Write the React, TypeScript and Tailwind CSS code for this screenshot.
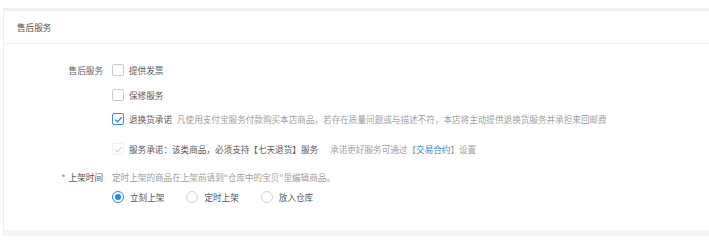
import React, { useState } from 'react';

const Checkbox: React.FC<{ checked?: boolean; disabled?: boolean }> = ({ checked, disabled }) => {
  if (disabled) {
    return (
      <span className="w-[12px] h-[12px] rounded-[2px] border border-[#f0f0f0] bg-white flex items-center justify-center shrink-0">
        <svg width="9" height="9" viewBox="0 0 10 10">
          <path d="M1.5 5.2 L4 7.6 L8.6 2.4" fill="none" stroke="#d5d5d5" strokeWidth="1.4" />
        </svg>
      </span>
    );
  }
  return (
    <span
      className={
        checked
          ? 'w-[12px] h-[12px] rounded-[2px] border border-[#3a8ee6] bg-white flex items-center justify-center shrink-0'
          : 'w-[12px] h-[12px] rounded-[2px] border border-[#c9c9c9] bg-white shrink-0'
      }
    >
      {checked && (
        <svg width="9" height="9" viewBox="0 0 10 10">
          <path d="M1.5 5.2 L4 7.6 L8.6 2.4" fill="none" stroke="#2d86e0" strokeWidth="1.5" />
        </svg>
      )}
    </span>
  );
};

const Radio: React.FC<{ checked?: boolean; label: string; onClick: () => void }> = ({ checked, label, onClick }) => (
  <button onClick={onClick} className="flex items-center gap-[6px] mr-[22px] cursor-pointer">
    <span
      className={
        checked
          ? 'w-[12px] h-[12px] rounded-full border border-[#2d86e0] flex items-center justify-center'
          : 'w-[12px] h-[12px] rounded-full border border-[#cfcfcf]'
      }
    >
      {checked && <span className="w-[6px] h-[6px] rounded-full bg-[#2d86e0]" />}
    </span>
    <span className="text-[#555]">{label}</span>
  </button>
);

const App: React.FC = () => {
  const [shelf, setShelf] = useState('now');

  return (
    <div className="w-[709px] h-[248px] bg-white pt-[8px] pl-[3px] text-[8.6px] leading-[14px] text-[#5a5a5a] font-['Noto_Sans_CJK_SC','Noto_Sans',sans-serif]">
      <div className="border-t-[3px] border-[#efefef] border-l border-l-[#ededed]">
        <div className="h-[33px] flex items-center pl-[13px] border-b border-[#efefef] text-[#555]">售后服务</div>

        <div className="pt-[19px] pb-[26px]">
          <div className="flex">
            <div className="w-[99px] text-right text-[#666]">售后服务</div>
            <div className="ml-[9px] flex flex-col">
              <div className="flex items-center gap-[5px] h-[14px]">
                <Checkbox />
                <span>提供发票</span>
              </div>
              <div className="flex items-center gap-[5px] h-[14px] mt-[11px]">
                <Checkbox />
                <span>保修服务</span>
              </div>
              <div className="flex items-center gap-[5px] h-[14px] mt-[10px]">
                <Checkbox checked />
                <span>退换货承诺</span>
                <span className="text-[#a0a0a0]">
                  凡使用支付宝服务付款购买本店商品，若存在质量问题或与描述不符，本店将主动提供退换货服务并承担来回邮费
                </span>
              </div>
              <div className="flex items-center gap-[5px] h-[14px] mt-[16px]">
                <Checkbox disabled />
                <span>服务承诺：该类商品，必须支持【七天退货】服务</span>
                <span className="ml-[7px] text-[#a0a0a0]">
                  承诺更好服务可通过【<a className="text-[#3089dc]">交易合约</a>】设置
                </span>
              </div>
            </div>
          </div>

          <div className="flex mt-[14px]">
            <div className="w-[99px] text-right text-[#555]">
              <span className="text-[#f05050] mr-[3px]">*</span>上架时间
            </div>
            <div className="ml-[9px] flex flex-col">
              <div className="text-[#a0a0a0] h-[14px]">定时上架的商品在上架前请到"仓库中的宝贝"里编辑商品。</div>
              <div className="flex items-center mt-[6px] h-[14px]">
                <Radio checked={shelf === 'now'} label="立刻上架" onClick={() => setShelf('now')} />
                <Radio checked={shelf === 'timed'} label="定时上架" onClick={() => setShelf('timed')} />
                <Radio checked={shelf === 'store'} label="放入仓库" onClick={() => setShelf('store')} />
              </div>
            </div>
          </div>
        </div>

        <div className="h-[6px] bg-[#f5f6f8]" />
      </div>
    </div>
  );
};

export default App;
